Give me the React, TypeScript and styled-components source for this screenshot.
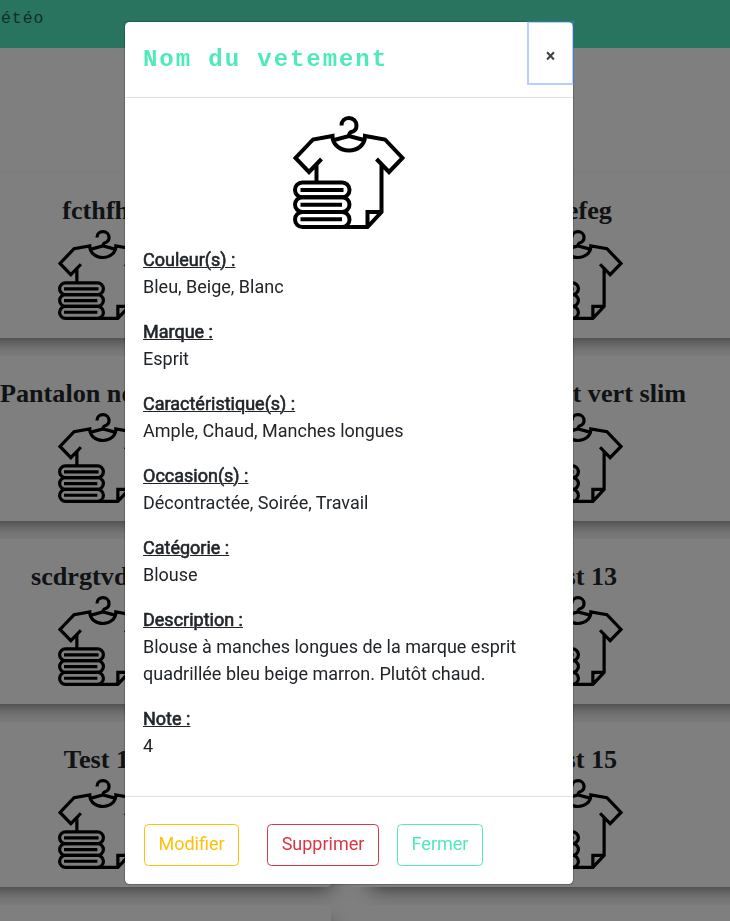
import React from "react";
import styled, { createGlobalStyle, css } from "styled-components";

const Global = createGlobalStyle`
  *, *::before, *::after { box-sizing: border-box; }
  html { font-size: 18px; }
  body {
    margin: 0;
    height: 921px;
    overflow: hidden;
    background: #fff;
    color: #212529;
    font-family: Roboto, sans-serif;
    font-size: 18px;
    line-height: 1.5;
  }
  h2, h5, p { margin: 0; }
`;

const Page = styled.div`
  height: 921px;
  overflow: hidden;
`;

const Navbar = styled.nav`
  height: 48px;
  background: #50e9bc;
  display: flex;
  align-items: flex-start;
  margin-left: -10px;
  padding-top: 5px;
`;

const NavLink = styled.a`
  font: 16.5px/27px "Liberation Mono", monospace;
  letter-spacing: 1px;
  color: #275d4b;
`;

const Wardrobe = styled.main`
  display: grid;
  grid-template-columns: 456px 456px;
  grid-auto-rows: 165px;
  gap: 18px 19px;
  margin: 125px 0 0 -125px;
`;

const Card = styled.article`
  display: flex;
  flex-direction: column;
  align-items: center;
  padding-top: 19px;
  border-radius: 4px;
  background: #fff;
  box-shadow: 10px 10px 20px -10px rgba(0, 0, 0, 0.7);
`;

const CardTitle = styled.h2`
  margin-bottom: 1px;
  font: bold 26.2px/37px "Liberation Serif", serif;
  white-space: nowrap;
`;

const Backdrop = styled.div`
  position: fixed;
  inset: 0;
  background: rgba(0, 0, 0, 0.5);
  display: flex;
  justify-content: center;
  align-items: flex-start;
  padding: 21px 32px 0 0;
`;

const Dialog = styled.section`
  width: 450px;
  height: 864px;
  display: flex;
  flex-direction: column;
  background: #fff;
  background-clip: padding-box;
  border: 1px solid rgba(0, 0, 0, 0.2);
  border-radius: 5.4px;
`;

const Header = styled.header`
  height: 76px;
  flex: none;
  display: flex;
  justify-content: space-between;
  align-items: flex-start;
  padding-left: 18px;
  border-bottom: 1px solid #dee2e6;
`;

const Title = styled.h5`
  padding-top: 20px;
  font: bold 24px/36px "Liberation Mono", monospace;
  letter-spacing: 1.93px;
  color: #50e9bc;
`;

const CloseButton = styled.button`
  width: 43px;
  height: 60px;
  margin: 1px 1px 0 0;
  padding: 5px 0 0;
  border: 0;
  background: transparent;
  outline: 2px solid rgba(77, 144, 254, 0.42);
  font: bold 18px/18px Roboto, sans-serif;
  color: #404244;
`;

const Body = styled.div`
  flex: 1;
  display: flex;
  flex-direction: column;
  padding: 18px;
`;

const Picture = styled.div`
  display: flex;
  justify-content: center;
  height: 113px;
  margin-bottom: 17px;
`;

const Field = styled.div`
  margin-bottom: 18px;
`;

const Label = styled.p`
  -webkit-text-stroke: 0.6px #212529;
  text-decoration: underline;
  text-decoration-thickness: 1px;
`;

const Value = styled.p``;

const Footer = styled.footer`
  height: 88px;
  flex: none;
  display: flex;
  align-items: flex-start;
  padding: 27px 0 0 19px;
  border-top: 1px solid #dee2e6;
`;

const Action = styled.button<{ $color: string; $width: number; $gap?: number }>`
  ${({ $color, $width, $gap = 0 }) => css`
    width: ${$width}px;
    margin-right: ${$gap}px;
    color: ${$color};
    border: 1px solid ${$color};
  `}
  height: 42px;
  padding: 0 0 3px;
  border-radius: 4.5px;
  background: transparent;
  font: 18px/27px Roboto, sans-serif;
`;

const ClothesIcon = ({ width, height }: { width: number; height: number }) => (
  <svg width={width} height={height} viewBox="0 0 112 113" fill="none" stroke="#000" strokeWidth="4" preserveAspectRatio="none">
    <path d="M48.500 9.500C48.500 4.800 51.800 2 56 2s7.500 3.300 7.500 7.500c0 3.300-2 5.700-5 6.500-2 .6-2.500 1.200-2.500 4.500" />
    <path d="M41 24l15-4 15 4" />
    <path d="M23.500 66V47M28.500 43L16 56 2.500 42 20 23.500l19.500-3.500c0 9 8 14.500 16.500 14.500S72 29 72 20L92 23.500 109.500 42 96 56 83.500 43M88.500 47v49L74.500 111H50M74.500 111V96h14" />
    <rect x="2" y="66.500" width="54.500" height="14.700" rx="7.300" />
    <rect x="2" y="81.200" width="54.500" height="14.700" rx="7.300" />
    <rect x="2" y="95.900" width="54.500" height="15.100" rx="7.500" />
    <path d="M7.500 74h43M7.500 88.700h41.500M7.500 103.300h41.500" />
  </svg>
);

const clothes = [
  "fcthfhh", "zrefeg",
  "Pantalon noir slim", "Pull court vert slim",
  "scdrgtvdrgtv", "Test 13",
  "Test 14", "Test 15",
  "", "",
];

const fields: [string, string][] = [
  ["Couleur(s) :", "Bleu, Beige, Blanc"],
  ["Marque :", "Esprit"],
  ["Caractéristique(s) :", "Ample, Chaud, Manches longues"],
  ["Occasion(s) :", "Décontractée, Soirée, Travail"],
  ["Catégorie :", "Blouse"],
  ["Description :", "Blouse à manches longues de la marque esprit quadrillée bleu beige marron. Plutôt chaud."],
  ["Note :", "4"],
];

export default function App() {
  return (
    <>
      <Global />
      <Page>
        <Navbar><NavLink>Météo</NavLink></Navbar>
        <Wardrobe>
          {clothes.map((name, index) => (
            <Card key={index}>
              {name && <CardTitle>{name}</CardTitle>}
              {name && <ClothesIcon width={90} height={90} />}
            </Card>
          ))}
        </Wardrobe>
      </Page>
      <Backdrop>
        <Dialog role="dialog" aria-modal="true">
          <Header>
            <Title>Nom du vetement</Title>
            <CloseButton aria-label="Fermer la fenêtre">×</CloseButton>
          </Header>
          <Body>
            <Picture><ClothesIcon width={112} height={113} /></Picture>
            {fields.map(([label, value]) => (
              <Field key={label}>
                <Label>{label}</Label>
                <Value>{value}</Value>
              </Field>
            ))}
          </Body>
          <Footer>
            <Action $color="#ffc107" $width={95} $gap={28}>Modifier</Action>
            <Action $color="#dc3545" $width={112} $gap={18}>Supprimer</Action>
            <Action $color="#50e9bc" $width={86}>Fermer</Action>
          </Footer>
        </Dialog>
      </Backdrop>
    </>
  );
}
